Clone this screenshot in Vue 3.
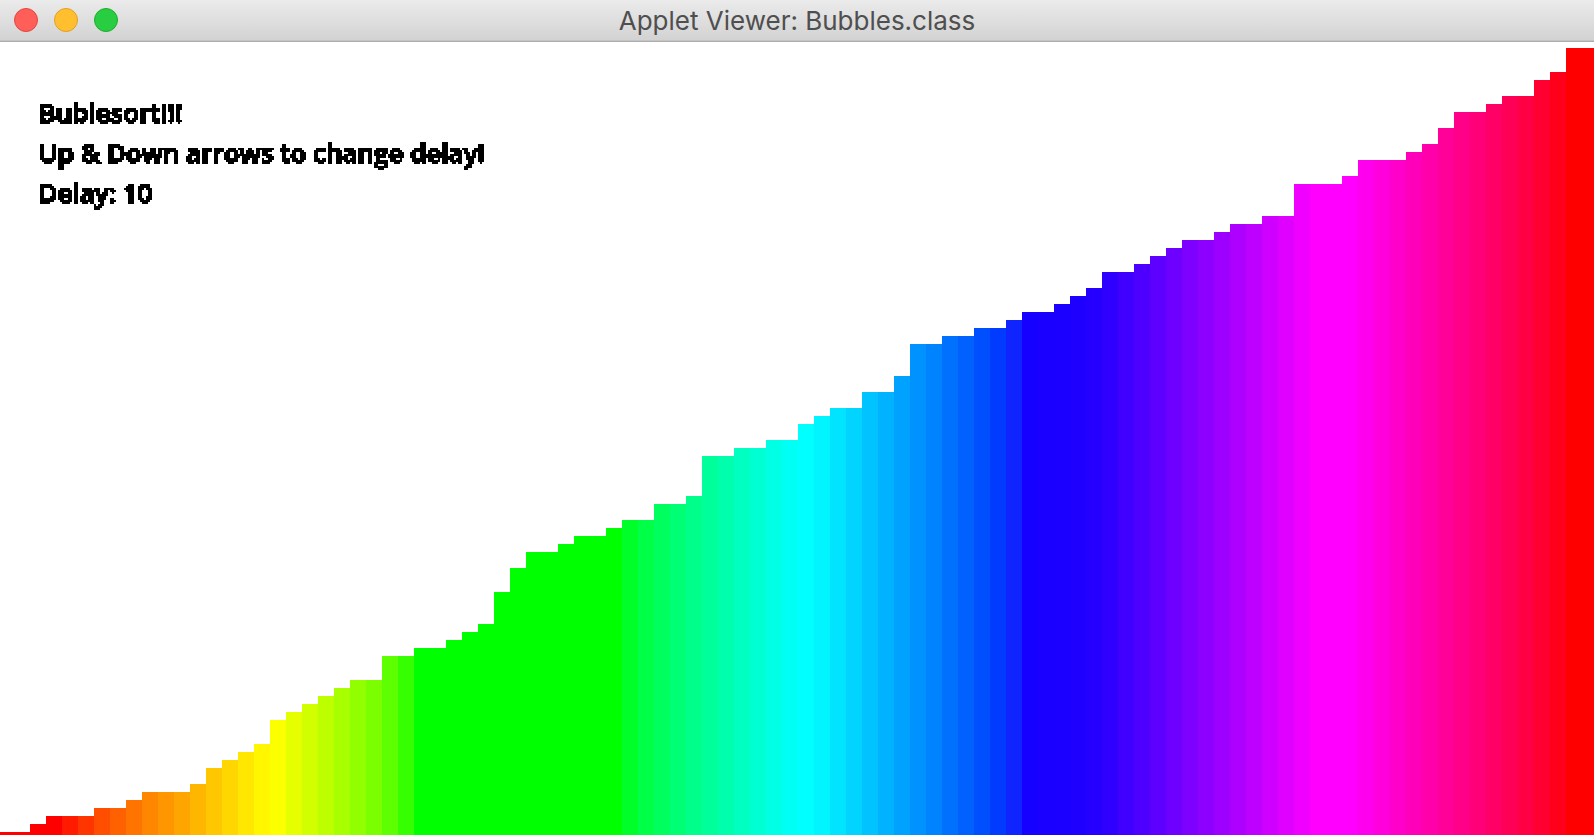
<script setup>
const values = [
  0, 0, 1, 2, 2, 2, 3, 3, 4, 5, 5, 5, 6, 8, 9, 10, 11, 14, 15, 16,
  17, 18, 19, 19, 22, 22, 23, 23, 24, 25, 26, 30, 33, 35, 35, 36, 37, 37, 38, 39,
  39, 41, 41, 42, 47, 47, 48, 48, 49, 49, 51, 52, 53, 53, 55, 55, 57, 61, 61, 62,
  62, 63, 63, 64, 65, 65, 66, 67, 68, 70, 70, 71, 72, 73, 74, 74, 75, 76, 76, 77,
  77, 81, 81, 81, 82, 84, 84, 84, 85, 86, 88, 90, 90, 91, 92, 92, 94, 95, 98, 98
]

const colors = (
  'ff0000 ff0000 ff0000 ff0000 ff1a00 ff3500 ff4e00 ff6000 ff7400 ff8700 ' +
  'ff9600 ffa500 ffb600 ffc700 ffd600 ffe700 fff600 fbff00 e6ff00 d2ff00 ' +
  'beff00 a8ff00 92ff00 7bff00 5eff00 35ff00 00ff00 00ff00 00ff00 00ff00 ' +
  '00ff00 00ff00 00ff00 00ff00 00ff00 00ff00 00ff00 00ff00 00ff00 00ff29 ' +
  '00ff47 00ff5e 00ff74 00ff8a 00ff9b 00ffad 00ffc0 00ffd3 00ffe4 00fff5 ' +
  '00ffff 00f5ff 00e4ff 00d4ff 00c3ff 00b2ff 00a2ff 0092ff 0083ff 0071ff ' +
  '0061ff 004fff 003bff 1024ff 1600ff 1a00ff 1c00ff 1e00ff 2500ff 3000ff ' +
  '3f00ff 4e00ff 5e00ff 6e00ff 7e00ff 8d00ff 9d00ff ae00ff be00ff cf00ff ' +
  'df00ff f000ff ff00ff ff00ff ff00ff ff00ee ff00dc ff00cb ff00ba ff00aa ' +
  'ff0099 ff0088 ff0078 ff0067 ff0057 ff0045 ff0031 ff001a ff0000 ff0000'
).split(' ')

const areaHeight = 793
const bars = values.map((value, i) => ({
  height: `${((value * 8 + 3) / areaHeight) * 100}%`,
  background: `#${colors[i]}`
}))
const delay = 10
</script>

<template>
  <div class="window">
    <header class="titlebar">
      <div class="controls">
        <button class="control close" type="button" aria-label="Close"></button>
        <button class="control minimize" type="button" aria-label="Minimize"></button>
        <button class="control zoom" type="button" aria-label="Zoom"></button>
      </div>
      <h1 class="title">Applet Viewer: Bubbles.class</h1>
    </header>
    <main class="applet">
      <div class="bars">
        <div v-for="(bar, i) in bars" :key="i" class="bar" :style="bar"></div>
      </div>
      <div class="info">
        <p>Bublesort!!!</p>
        <p>Up &amp; Down arrows to change delay!</p>
        <p>Delay: {{ delay }}</p>
      </div>
    </main>
    <!-- Draws text as hard-edged blocks of 2x2 pixels -->
    <svg class="defs" width="0" height="0" aria-hidden="true">
      <filter id="blocks" filterUnits="userSpaceOnUse" primitiveUnits="userSpaceOnUse" x="0" y="0" width="600" height="160" color-interpolation-filters="sRGB">
        <feFlood x="0" y="0" width="1" height="1" flood-color="#000" result="dot" />
        <feOffset in="dot" dx="0" dy="0" x="0" y="0" width="2" height="2" />
        <feTile x="0" y="0" width="600" height="160" result="grid" />
        <feComponentTransfer in="SourceGraphic" result="hard">
          <feFuncA type="discrete" tableValues="0 1" />
        </feComponentTransfer>
        <feComposite in="hard" in2="grid" operator="in" result="a" />
        <feOffset in="a" dx="1" dy="0" result="b" />
        <feOffset in="a" dx="0" dy="1" result="c" />
        <feOffset in="a" dx="1" dy="1" result="d" />
        <feMerge>
          <feMergeNode in="a" />
          <feMergeNode in="b" />
          <feMergeNode in="c" />
          <feMergeNode in="d" />
        </feMerge>
      </filter>
    </svg>
  </div>
</template>

<style>
body {
  margin: 0;
  background: #fff;
}
</style>

<style scoped>
.window {
  display: flex;
  flex-direction: column;
  height: 100vh;
  overflow: hidden;
  background: #fff;
}
.titlebar {
  box-sizing: border-box;
  display: grid;
  grid-template-columns: 1fr auto 1fr;
  align-items: center;
  height: 42px;
  flex: none;
  padding: 0 14px 1px;
  background: linear-gradient(#ebebeb, #d2d2d2);
  border-bottom: 1px solid #adadad;
  box-shadow: inset 0 -1px #c4c4c4;
}
.controls {
  display: flex;
  gap: 16px;
}
.control {
  box-sizing: border-box;
  width: 24px;
  height: 24px;
  padding: 0;
  border: 1px solid;
  border-radius: 50%;
}
.close {
  background: #ff5f58;
  border-color: #e2463f;
}
.minimize {
  background: #ffbf2f;
  border-color: #e0a023;
}
.zoom {
  background: #28cd41;
  border-color: #1dad2b;
}
.title {
  margin: 0;
  padding-top: 2px;
  font: 400 26px/38px Inter, sans-serif;
  color: #4f4f4f;
}
.applet {
  position: relative;
  flex: 1;
  min-height: 0;
}
.bars {
  display: grid;
  grid-template-columns: repeat(100, 1fr);
  align-items: end;
  height: 100%;
  margin: 0 -4px 0 -2px;
}
.info {
  position: absolute;
  top: 50px;
  left: 38px;
  font: 600 26px/40px "Open Sans", "Noto Sans", sans-serif;
  color: #000;
  -webkit-text-stroke: 2px #000;
  filter: url(#blocks);
}
.info p {
  margin: 0;
}
.defs {
  position: absolute;
}
</style>
